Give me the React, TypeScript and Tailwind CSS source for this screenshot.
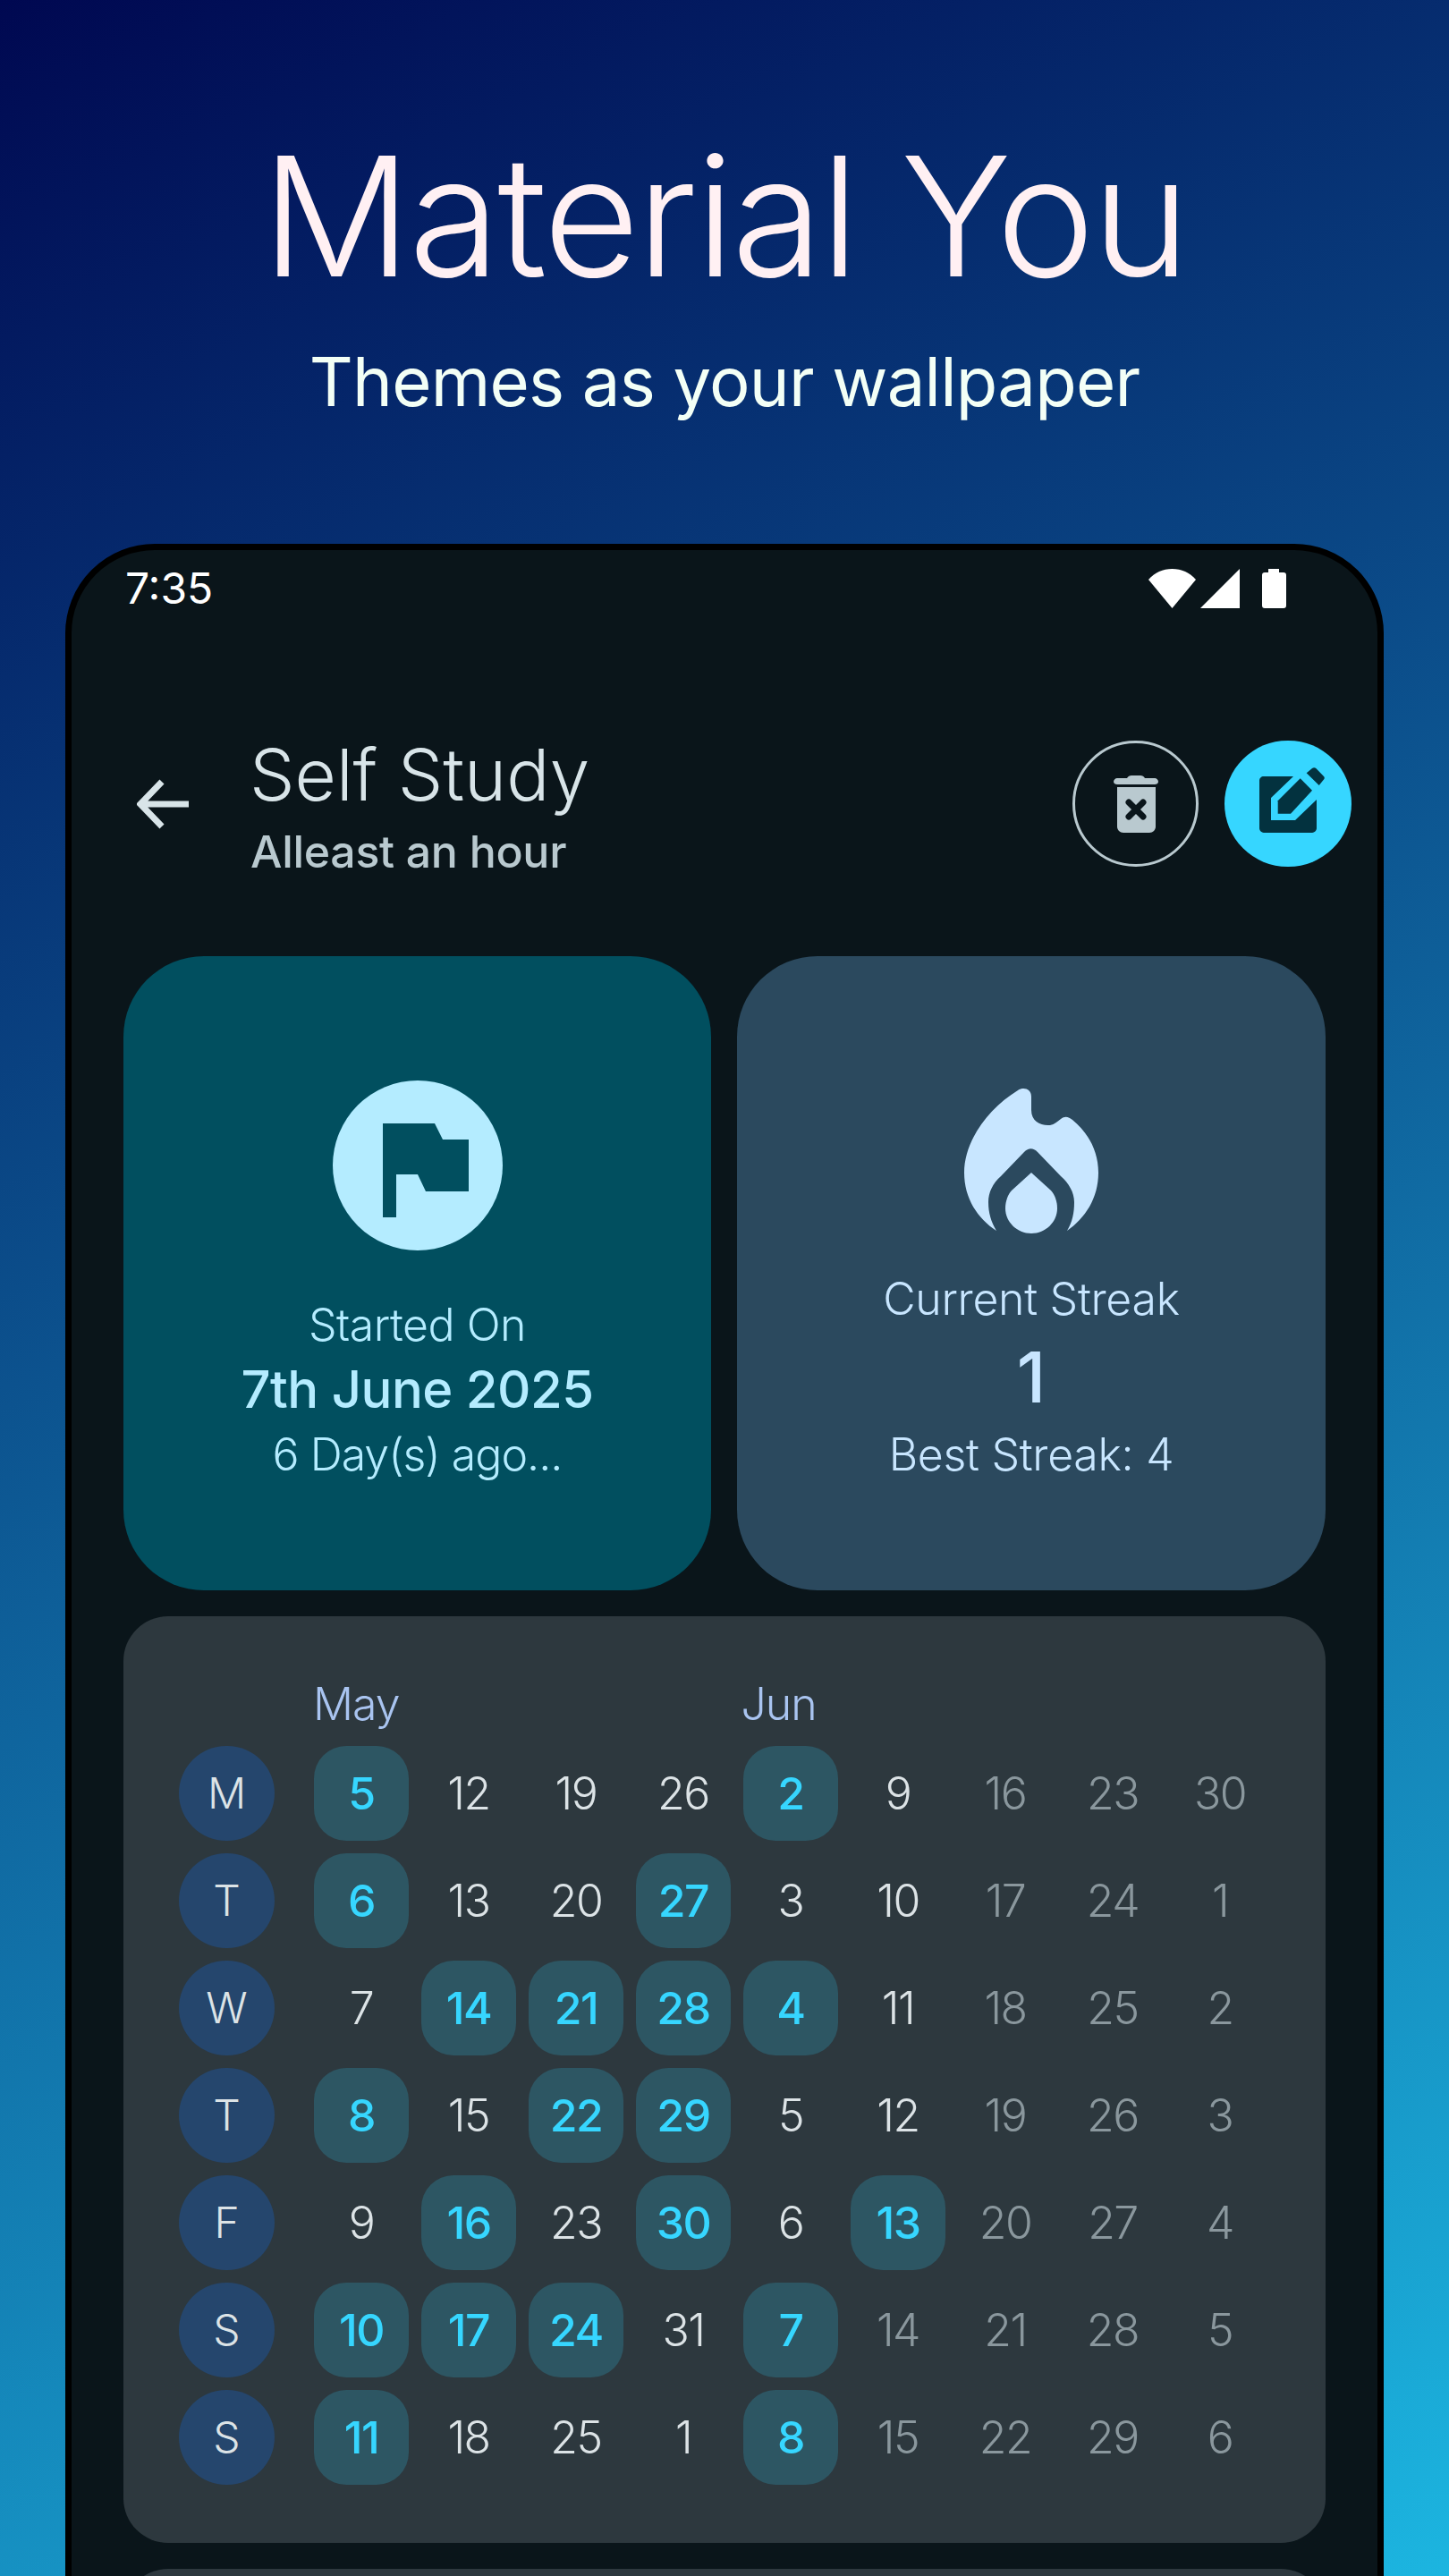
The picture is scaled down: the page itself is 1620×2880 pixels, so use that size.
import React from 'react';

const FONT = "font-['Inter','Noto_Sans',sans-serif]";

// calendar rows, one per weekday; h = habit done that day, m = outside the range (muted)
type Cell = { n: number; h?: boolean; m?: boolean };
const d = (n: number): Cell => ({ n });
const h = (n: number): Cell => ({ n, h: true });
const m = (n: number): Cell => ({ n, m: true });

const rows: { day: string; cells: Cell[] }[] = [
  { day: 'M', cells: [h(5), d(12), d(19), d(26), h(2), d(9), m(16), m(23), m(30)] },
  { day: 'T', cells: [h(6), d(13), d(20), h(27), d(3), d(10), m(17), m(24), m(1)] },
  { day: 'W', cells: [d(7), h(14), h(21), h(28), h(4), d(11), m(18), m(25), m(2)] },
  { day: 'T', cells: [h(8), d(15), h(22), h(29), d(5), d(12), m(19), m(26), m(3)] },
  { day: 'F', cells: [d(9), h(16), d(23), h(30), d(6), h(13), m(20), m(27), m(4)] },
  { day: 'S', cells: [h(10), h(17), h(24), d(31), h(7), m(14), m(21), m(28), m(5)] },
  { day: 'S', cells: [h(11), d(18), d(25), d(1), h(8), m(15), m(22), m(29), m(6)] },
];

const StatusIcons = () => (
  <div className="flex items-start pr-[102px]">
    <svg width="53" height="44" viewBox="0 0 53 44" className="mr-[5px]">
      <path d="M26.5 44 L0 12 C7 4 16 0 26.5 0 C37 0 46 4 53 12 Z" fill="#fff" />
    </svg>
    <svg width="44" height="44" viewBox="0 0 44 44" className="mr-[25px]">
      <path d="M44 0 V44 H0 Z" fill="#fff" />
    </svg>
    <svg width="27" height="44" viewBox="0 0 27 44">
      <path d="M7 0 H19 V4 H24 C26 4 27 5 27 7 V41 C27 43 26 44 24 44 H3 C1 44 0 43 0 41 V7 C0 5 1 4 3 4 H7 Z" fill="#fff" />
    </svg>
  </div>
);

const TrashIcon = () => (
  <svg width="50" height="64" viewBox="0 0 50 64">
    <path d="M15 3 C16 1 18 0 20 0 H30 C32 0 34 1 35 3 H46 C48 3 50 5 50 7 C50 9 48 10 46 10 H4 C2 10 0 9 0 7 C0 5 2 3 4 3 Z" fill="#b9c9cf" />
    <path d="M4 13 H47 V57 C47 61 44 64 40 64 H11 C7 64 4 61 4 57 Z" fill="#b9c9cf" />
    <path d="M17 30 L33 46 M33 30 L17 46" stroke="#0a151a" strokeWidth="7" strokeLinecap="round" />
  </svg>
);

const EditIcon = () => (
  <svg width="74" height="73" viewBox="0 0 74 73" className="ml-[10px] mb-[9px]">
    <path d="M5 10 H38 L13 34 V59 H40 L64 36 V68 C64 71 61 73 58 73 H6 C3 73 0 71 0 68 V15 C0 12 2 10 5 10 Z" fill="#03323f" />
    <path d="M20.7 51.7 V37.3 L45.7 12.3 L59 25.7 L35 51.7 Z" fill="#03323f" />
    <path d="M52.7 6.3 L59 1 C60.500 0 62 0 63.300 1 L72 10 C73 11 73 12.500 72 13.500 L66.700 20 Z" fill="#03323f" />
  </svg>
);

const FlameIcon = () => (
  <svg width="150" height="163" viewBox="0 0 150 163">
    <path
      d="M60 3 C66 -1 75 1 75 10 V25 C75 38 86 43 96 42 C101 41 104 38 108 35 C113 31 117 33 121 36 C138 50 150 70 150 95 C150 124 135 146 115 160 C121 150 123 140 123 128 C123 117 117 107 108 99 L82 72 C77 67 72 67 67 72 L41 99 C32 107 27 117 27 128 C27 140 30 150 36 160 C15 146 0 124 0 95 C0 60 26 24 60 3 Z"
      fill="#c8e6ff"
    />
    <path d="M75 95 L97 115 C101 119 104 127 104 135 C104 150 91 163 75 163 C59 163 46 150 46 135 C46 127 49 119 53 115 Z" fill="#c8e6ff" />
  </svg>
);

const StatLine = ({ children, className }: { children: React.ReactNode; className: string }) => (
  <div className={`whitespace-nowrap leading-none ${className}`}>{children}</div>
);

export default function App() {
  return (
    <div className={`${FONT} w-[1620px] h-[2880px] overflow-hidden bg-[linear-gradient(155deg,#000851,#1cb5e0)] flex flex-col items-center`}>
      <h1 className="mt-[142px] text-[186px] leading-[200px] font-light tracking-[-3px] text-[#fff0f3] whitespace-nowrap">
        Material You
      </h1>
      <p className="mt-[39px] text-[76px] leading-[90px] font-normal tracking-[-0.8px] text-[#f3fff6] whitespace-nowrap">
        Themes as your wallpaper
      </p>

      {/* phone frame, cut off by the bottom of the page */}
      <div className="mt-[137px] w-[1474px] h-[2400px] shrink-0 rounded-t-[100px] border-[7px] border-black bg-[#0a151a]">
        <div className="flex items-center justify-between pl-[60px] pt-[26px] h-[60px]">
          <span className="text-[48px] font-normal text-white leading-none">7:35</span>
          <StatusIcons />
        </div>

        <div className="mt-[153px] h-[141px] flex items-center pl-[73px] pr-[29px]">
          <svg width="60" height="56" viewBox="0 0 60 56" className="shrink-0">
            <path d="M58 28 H5 M28 3 L4 28 L28 53" fill="none" stroke="#d8e4e8" strokeWidth="7" />
          </svg>
          <div className="ml-[66px] flex-1">
            <div className="text-[80px] leading-[90px] font-light text-[#d8e4e8]">Self Study</div>
            <div className="mt-[16px] ml-[1px] text-[50px] leading-[50px] font-medium text-[#b9c9cf] tracking-[-0.3px]">Alleast an hour</div>
          </div>
          <div className="flex items-center gap-[29px]">
            <div className="w-[141px] h-[141px] rounded-full border-[3px] border-[#b9c9cf] flex items-center justify-center">
              <TrashIcon />
            </div>
            <div className="w-[142px] h-[141px] rounded-full bg-[#36d6ff] flex items-center justify-center">
              <EditIcon />
            </div>
          </div>
        </div>

        <div className="mt-[100px] mx-[58px] flex flex-col gap-[29px]">
          <div className="flex gap-[29px]">
            <div className="w-[657px] h-[709px] rounded-[90px] bg-[#014f5f] text-[#b4ecff] flex flex-col items-center">
              <div className="mt-[139px] w-[190px] h-[190px] rounded-full bg-[#b4ecff] flex items-center justify-center">
                <svg width="96" height="105" viewBox="0 0 96 105" className="ml-[18px] mt-[10px]">
                  <path d="M0 0 H58 L67 18 H96 V76 H48 L39 57 H15 V105 H0 Z" fill="#014f5f" />
                </svg>
              </div>
              <StatLine className="mt-[58px] text-[50px] font-light tracking-[-0.5px]">Started On</StatLine>
              <StatLine className="mt-[18px] text-[58px] font-medium tracking-[-0.5px]">7th June 2025</StatLine>
              <StatLine className="mt-[19px] text-[50px] font-light tracking-[-1px]">6 Day(s) ago...</StatLine>
            </div>
            <div className="w-[658px] h-[709px] rounded-[90px] bg-[#2b495e] text-[#c8e6ff] flex flex-col items-center">
              <div className="mt-[147px]">
                <FlameIcon />
              </div>
              <StatLine className="mt-[48px] text-[50px] font-light tracking-[-0.3px]">Current Streak</StatLine>
              <StatLine className="mt-[24px] text-[78px] font-medium">1</StatLine>
              <StatLine className="mt-[22px] text-[50px] font-light tracking-[-0.3px]">Best Streak: 4</StatLine>
            </div>
          </div>

          <div className="rounded-[50px] bg-[#2d383e] h-[1036px] pl-[62px] pt-[68px]">
            <div className="h-[77px] text-[50px] leading-[60px] font-light text-[#a9c4f0] tracking-[-1px]">
              <span className="ml-[150px]">May</span>
              <span className="ml-[382px]">Jun</span>
            </div>
            <div className="flex flex-col gap-[14px]">
              {rows.map((row, i) => (
                <div key={i} className="flex gap-[14px]">
                  <div className="w-[107px] h-[106px] mr-[30px] rounded-full bg-[#25466d] flex items-center justify-center text-[48px] font-light text-[#dce3e6]">
                    {row.day}
                  </div>
                  {row.cells.map((c, j) => (
                    <div
                      key={j}
                      className={
                        c.h
                          ? 'w-[106px] h-[106px] rounded-[36px] bg-[#2d5663] flex items-center justify-center text-[50px] font-[450] text-[#36d6ff] tracking-[-1.5px]'
                          : c.m
                            ? 'w-[106px] h-[106px] flex items-center justify-center text-[50px] font-light text-[#8a979d] tracking-[-1.5px]'
                            : 'w-[106px] h-[106px] flex items-center justify-center text-[50px] font-light text-[#dce3e6] tracking-[-1.5px]'
                      }
                    >
                      {c.n}
                    </div>
                  ))}
                </div>
              ))}
            </div>
          </div>

          <div className="rounded-[50px] bg-[#2d383e] h-[200px]" />
        </div>
      </div>
    </div>
  );
}
